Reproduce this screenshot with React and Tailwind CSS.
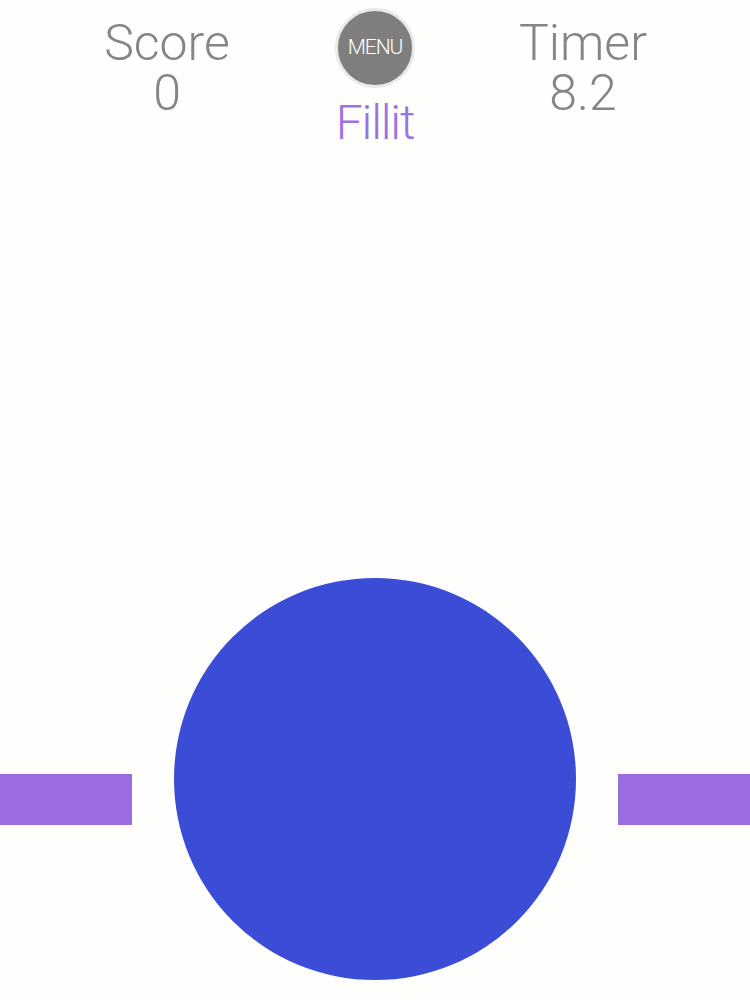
import React from "react";

// score / timer column in the header
const Stat = ({ label, value }) => (
	<div className="flex flex-col items-center text-[50px] leading-[50px] font-light text-[#858585]">
		<span>{label}</span>
		<span>{value}</span>
	</div>
);

export default function App() {
	const score = 0;
	const timer = 8.2;

	return (
		<div
			className="w-[750px] h-[1000px] bg-[#fefefc] overflow-hidden"
			style={{ fontFamily: "Roboto, 'Helvetica Neue', Arial, sans-serif" }}
		>
			{/* HEADER */}
			<div className="grid grid-cols-3 w-[624px] mx-auto pt-[18px]">
				<Stat label="Score" value={score} />
				<div className="flex flex-col items-center -mt-[10px]">
					<button className="w-[80px] h-[80px] rounded-full bg-[#7e7e7e] border-[3px] border-[#e9e9e7] text-white text-[21px] font-light tracking-tighter flex items-center justify-center">
						MENU
					</button>
					<span className="text-[48px] leading-[50px] font-light text-[#9b72e2] mt-[10px] tracking-tight">
						Fillit
					</span>
				</div>
				<Stat label="Timer" value={timer} />
			</div>

			{/* GAME AREA */}
			<div className="flex items-start mt-[430px]">
				<div className="w-[132px] h-[51px] bg-[#9a6ce0] mt-[196px]" />
				<div className="w-[402px] h-[402px] rounded-full bg-[#3b4dd7] mx-[42px]" />
				<div className="w-[132px] h-[51px] bg-[#9a6ce0] mt-[196px]" />
			</div>
		</div>
	);
}
